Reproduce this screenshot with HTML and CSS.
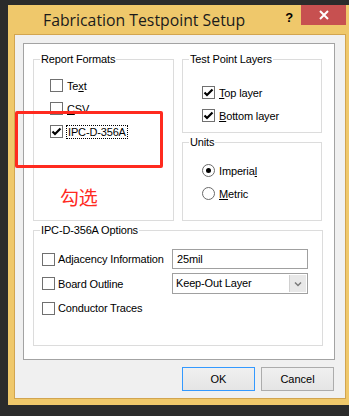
FILE: index.html
```html
<!DOCTYPE html>
<html>
  <head>
    <title>Fabrication Testpoint Setup</title>
    <link rel="stylesheet" href="styles.css">
  </head>
  <body>
    <div class="window">
      <div class="titlebar">
        <span class="title">Fabrication Testpoint Setup</span>
        <span class="help">?</span>
        <span class="close">
          <svg width="10" height="10" viewBox="0 0 10 10"><path d="M1 1L9 9M9 1L1 9" stroke="#fff" stroke-width="2"/></svg>
        </span>
      </div>

      <div class="client">
        <div class="panel">
          <div class="top-grid">
            <fieldset class="group formats">
              <legend>Report Formats</legend>
              <div class="group-body">
                <div class="opt"><span class="box"></span><span>Te<u>x</u>t</span></div>
                <div class="opt"><span class="box"></span><span><u>C</u>SV</span></div>
                <div class="opt"><span class="box checked"><svg width="11" height="11" viewBox="0 0 11 11"><path d="M1.5 5.5L4 8L9.5 2.5" fill="none" stroke="#000" stroke-width="2.2"/></svg></span><span class="focus">IPC-D-356A</span></div>
              </div>
            </fieldset>

            <fieldset class="group layers">
              <legend>Test Point Layers</legend>
              <div class="group-body">
                <div class="opt"><span class="box checked"><svg width="11" height="11" viewBox="0 0 11 11"><path d="M1.5 5.5L4 8L9.5 2.5" fill="none" stroke="#000" stroke-width="2.2"/></svg></span><span><u>T</u>op layer</span></div>
                <div class="opt"><span class="box checked"><svg width="11" height="11" viewBox="0 0 11 11"><path d="M1.5 5.5L4 8L9.5 2.5" fill="none" stroke="#000" stroke-width="2.2"/></svg></span><span><u>B</u>ottom layer</span></div>
              </div>
            </fieldset>

            <fieldset class="group units">
              <legend>Units</legend>
              <div class="group-body">
                <div class="opt"><span class="radio on"></span><span>Imperia<u>l</u></span></div>
                <div class="opt"><span class="radio"></span><span><u>M</u>etric</span></div>
              </div>
            </fieldset>
          </div>

          <fieldset class="group options">
            <legend>IPC-D-356A Options</legend>
            <div class="group-body opt-grid">
              <div class="opt"><span class="box"></span><span>Adjacency Information</span></div>
              <div class="field">25mil</div>
              <div class="opt"><span class="box"></span><span>Board Outline</span></div>
              <div class="field select">
                <span class="sel-text">Keep-Out Layer</span>
                <span class="arrow"><svg width="8" height="6" viewBox="0 0 8 6"><path d="M1 1.5L4 4.5L7 1.5" fill="none" stroke="#7a7a7a" stroke-width="1.5"/></svg></span>
              </div>
              <div class="opt"><span class="box"></span><span>Conductor Traces</span></div>
            </div>
          </fieldset>
        </div>

        <div class="buttons">
          <button class="btn default">OK</button>
          <button class="btn">Cancel</button>
        </div>
      </div>

      <div class="mark-box"></div>
      <div class="mark-text">勾选</div>
    </div>
  </body>
</html>
```

FILE: styles.css
```css
body {
  margin: 0;
  background: #2b2b2b;
  font-family: "Liberation Sans", Arial, sans-serif;
  font-size: 11px;
  letter-spacing: -0.15px;
  color: #000;
  overflow: hidden;
}
.window {
  position: relative;
  margin: 5px 0 0 8px;
  width: 341px;
  height: 400px;
  background: #efc86b;
  padding: 0 3px 0 6px;
  box-sizing: border-box;
}
.titlebar {
  display: flex;
  align-items: flex-start;
  height: 29px;
}
.title {
  font-family: "Open Sans", "Noto Sans", sans-serif;
  font-size: 15.8px;
  letter-spacing: 0;
  color: #1b1b1b;
  margin: 5px 0 0 29px;
  line-height: 20px;
}
.help {
  margin: 5px 0 0 auto;
  font-weight: bold;
  font-size: 13px;
  line-height: 16px;
}
.close {
  display: flex;
  align-items: center;
  justify-content: center;
  width: 45px;
  height: 20px;
  margin-left: 8px;
  background: #c75050;
}
.client {
  border: 1px solid #d2a550;
  background: #f0f0f0;
  height: 365px;
  box-sizing: border-box;
  padding: 8px 10px 8px 8px;
}
.panel {
  background: #fff;
  border: 1px solid #a3a3a3;
  height: 317px;
  box-sizing: border-box;
  padding: 8px 0 0 9px;
}
.top-grid {
  display: grid;
  grid-template-columns: 141px 140px;
  grid-template-rows: 81px 86px;
  column-gap: 8px;
  row-gap: 2px;
}
.group {
  margin: 0;
  padding: 0;
  border: 1px solid #dcdcdc;
  min-width: 0;
  box-sizing: border-box;
}
.group legend {
  margin-left: 6px;
  padding: 0 1px;
  line-height: 14px;
}
.formats {
  grid-row: 1 / 3;
}
.formats .group-body {
  padding: 8px 0 0 16px;
}
.layers .group-body {
  padding: 15px 0 0 19px;
}
.units .group-body {
  padding: 10px 0 0 19px;
}
.options {
  margin-top: 2px;
  width: 290px;
  height: 123px;
}
.options .group-body {
  padding: 10px 0 0 8px;
}
.opt {
  display: flex;
  align-items: center;
  gap: 4px;
  height: 23px;
}
.box {
  display: flex;
  align-items: center;
  justify-content: center;
  width: 13px;
  height: 13px;
  box-sizing: border-box;
  border: 1px solid #707070;
  background: #fff;
}
.radio {
  display: flex;
  align-items: center;
  justify-content: center;
  width: 13px;
  height: 13px;
  box-sizing: border-box;
  border: 1px solid #6a6a6a;
  border-radius: 50%;
  background: #fff;
}
.radio.on::after {
  content: "";
  width: 5px;
  height: 5px;
  border-radius: 50%;
  background: #000;
}
.focus {
  outline: 1px dotted #000;
  padding: 0 1px;
  line-height: 12px;
}
.opt-grid {
  display: grid;
  grid-template-columns: 130px 136px;
  grid-template-rows: 24px 25px 24px;
  align-items: center;
}
.opt-grid .opt {
  height: auto;
  gap: 3px;
}
.field {
  height: 20px;
  box-sizing: border-box;
  border: 1px solid #a0a0a0;
  padding: 0 4px;
  line-height: 18px;
  background: #fff;
}
.select {
  display: flex;
  height: 21px;
  padding: 0 0 0 3px;
  line-height: 19px;
}
.sel-text {
  flex: 1;
}
.arrow {
  display: flex;
  align-items: center;
  justify-content: center;
  width: 16px;
  margin: 1px;
  background: #e8e8e8;
  border-left: 1px solid #d0d0d0;
}
.buttons {
  display: flex;
  justify-content: flex-end;
  gap: 6px;
  margin-top: 7px;
  padding-right: 1px;
}
.btn {
  width: 73px;
  height: 24px;
  font-family: "Liberation Sans", Arial, sans-serif;
  font-size: 11px;
  color: #000;
  background: linear-gradient(#f0f0f0, #e5e5e5);
  border: 1px solid #acacac;
  padding: 0;
}
.btn.default {
  border-color: #3399ff;
}
.mark-box {
  position: absolute;
  left: 7px;
  top: 106px;
  width: 148px;
  height: 57px;
  box-sizing: border-box;
  border: 3px solid #ff2a1f;
  border-radius: 2px;
}
.mark-text {
  position: absolute;
  left: 52px;
  top: 180px;
  font-family: "Noto Sans CJK SC", sans-serif;
  font-size: 19px;
  line-height: 24px;
  color: #ff2a1f;
}
```
